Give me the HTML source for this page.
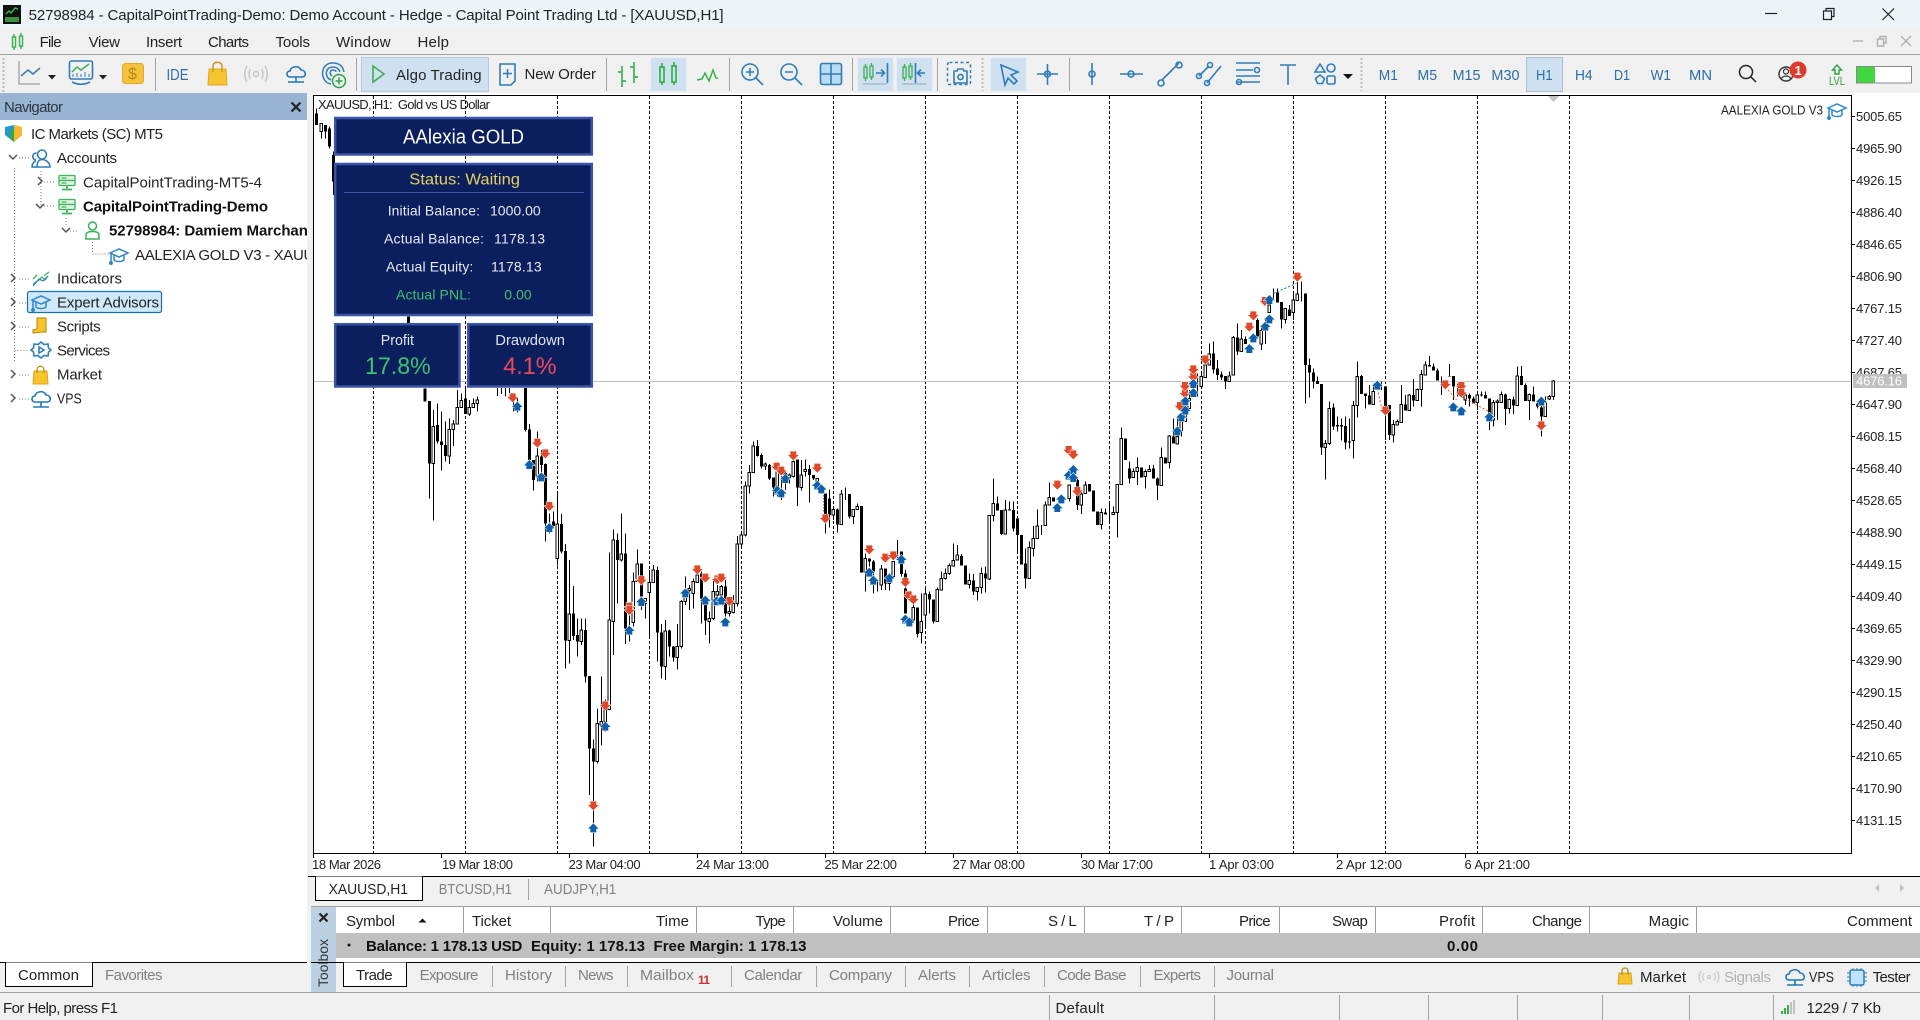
<!DOCTYPE html>
<html lang="en"><head><meta charset="utf-8"><title>MT5</title>
<style>
html,body{margin:0;padding:0;background:#f0f0f0;width:1920px;height:1020px;overflow:hidden}
svg{display:block;position:absolute;left:0;top:0}
text{font-family:"Liberation Sans",sans-serif;font-size:15px;fill:#222;white-space:pre}
.g{fill:#808080}.b{font-weight:bold;fill:#111}
.tf{fill:#2a6fa8;font-size:15px}
.ax{font-size:13px;fill:#222}
.p{fill:#e8eaf4;font-size:14px}
.ic{fill:none;stroke:#2f7db9;stroke-width:1.6}
.sep{stroke:#a0a0a0;stroke-width:1}
.dot{stroke:#777;stroke-width:1;stroke-dasharray:1 2;fill:none}
.chev{fill:none;stroke:#555;stroke-width:1.5}
</style></head><body>
<svg width="1920" height="1020" viewBox="0 0 1920 1020" xmlns="http://www.w3.org/2000/svg">
<defs>
<path id="d" d="M-9-14H9V-3H16L0 13-16-3H-9Z" fill="#e0482a" stroke="#fff" stroke-width="3" paint-order="stroke"/>
<path id="u" d="M-9 14H9V3H16L0-13-16 3H-9Z" fill="#0f60aa" stroke="#fff" stroke-width="3" paint-order="stroke"/>
<g id="hat" fill="none" stroke="#2f86c6" stroke-width="1.5"><path d="M1 6 10 2 19 6 10 10Z"/><path d="M5 8v5c2 2 8 2 10 0V8"/><path d="M2 7v8"/><circle cx="2" cy="16" r="1.2" fill="#2f86c6"/></g>
<g id="cloud" fill="none" stroke="#1f78b8" stroke-width="1.6"><path d="M5 13C1 13 1 7 5 7 6 2 14 1 16 6 21 6 22 13 17 13Z"/><path d="M11 13v5M3 18h16"/></g>
<g id="srv" fill="#dff3e3" stroke="#3db35a" stroke-width="1.300"><rect x=".5" y=".5" width="16" height="5" rx="1"/><rect x=".5" y="5.500" width="16" height="5" rx="1"/><path d="M3 3h5M3 8h5" fill="none"/><path d="M8.500 10.500v3M3.500 14.500h10" fill="none" stroke-width="1.800"/></g>
</defs>

<rect width="1920" height="1020" fill="#f0f0f0"/>
<rect width="1920" height="29" fill="#edf3f7"/>
<rect y="54" width="1920" height="1" fill="#a0a0a0"/>

<!-- title bar -->
<rect x="3" y="5" width="18" height="19" fill="#111"/>
<path d="M6 14l3-3 2 2 4-5 3 1" stroke="#38b24a" stroke-width="1.5" fill="none"/>
<rect x="5" y="17" width="14" height="5" fill="#3f8f3f"/>
<text x="28.6" y="20" textLength="695">52798984 - CapitalPointTrading-Demo: Demo Account - Hedge - Capital Point Trading Ltd - [XAUUSD,H1]</text>
<path d="M1765 13.5h12" stroke="#222" stroke-width="1.2"/>
<path d="M1823.5 11h8v8.5h-8zM1826 11V8.5h8v8h-2.5" fill="none" stroke="#222" stroke-width="1.2"/>
<path d="M1882.500 8.500l11.500 11.500M1894 8.500l-11.500 11.500" stroke="#222" stroke-width="1.2"/>

<!-- menu -->
<g fill="none" stroke="#3db35a" stroke-width="1.5"><path d="M12.500 37h3v10h-3zM19.500 36h3v10h-3zM14 34v3M14 47v3M21 33v3M21 46v3"/></g>
<text x="39.600" y="47" textLength="22">File</text>
<text x="88.600" y="47" textLength="31.400">View</text>
<text x="146" y="47" textLength="36">Insert</text>
<text x="208" y="47" textLength="41">Charts</text>
<text x="275.500" y="47" textLength="34.500">Tools</text>
<text x="336" y="47" textLength="54.600">Window</text>
<text x="417.500" y="47" textLength="31.500">Help</text>
<path d="M1853 41h10" stroke="#b0b0b0" stroke-width="1.4"/>
<path d="M1877.500 39h6v7h-6zM1880 39v-2.500h6v6.500h-2.500" fill="none" stroke="#b0b0b0" stroke-width="1.4"/>
<path d="M1901 36l10 10M1911 36l-10 10" stroke="#b0b0b0" stroke-width="1.4"/>

<!-- toolbar -->
<path d="M3.500 58v34" stroke="#b8b8b8" stroke-width="2" stroke-dasharray="2 2"/>
<path d="M19 61V84H40" fill="none" stroke="#aaa" stroke-width="1.500"/>
<path d="M21 76l7-6 5 4 7-6" fill="none" stroke="#2f7db9" stroke-width="1.500"/>
<path d="M48 75h8l-4 4.500z" fill="#222"/>
<rect x="69.500" y="61" width="23" height="18" rx="2" class="ic"/>
<path d="M72 72l5-5 4 3 8-6" fill="none" stroke="#3db35a" stroke-width="1.500"/>
<path d="M73 77v-3M77 77v-4M81 77v-3M85 77v-5M89 77v-3" stroke="#2f7db9"/>
<path d="M72 82c6 3 12 3 18 0" class="ic"/>
<path d="M99 75h8l-4 4.500z" fill="#222"/>
<rect x="122.500" y="63.500" width="21" height="20" rx="3" fill="#f6c23e" stroke="#e0a92a"/>
<text x="128" y="79" style="font-size:16px;fill:#b98a13">$</text>
<path d="M155.500 58v33M356.500 58v33M606.500 58v33M729.500 58v33M852.500 58v33M937.500 58v33M1069.500 58v33" class="sep"/>
<text x="166.500" y="80" textLength="22" lengthAdjust="spacingAndGlyphs" style="fill:#2a6fa8;font-size:16px">IDE</text>
<path d="M209 69h17l1 16h-19z" fill="#f5c42e" stroke="#e0a92a"/>
<path d="M213 72v-6c0-5 9-5 9 0v6" fill="none" stroke="#c79418" stroke-width="1.400"/>
<g fill="none" stroke="#c4c4c4" stroke-width="1.400"><circle cx="256" cy="74" r="2.500"/><path d="M250.500 69c-2 3-2 7 0 10M261.500 69c2 3 2 7 0 10M247 66c-3 5-3 11 0 16M265 66c3 5 3 11 0 16"/></g>
<use href="#cloud" x="285" y="64"/>
<g fill="none" stroke="#2f7db9" stroke-width="1.500"><path d="M331 84c-12-2-11-22 2-21 7 0 10 4 11 9"/><path d="M331 80c-7-3-6-13 2-13 4 0 6 2 7 5"/><path d="M332 76c-3-2-2-6 1-6 2 0 3 1 3 2"/></g>
<circle cx="339" cy="81" r="6.500" fill="#e6f6e8" stroke="#2f9e4a" stroke-width="1.500"/><path d="M339 77.500v7M335.500 81h7" stroke="#2f9e4a" stroke-width="1.500"/>
<rect x="361.500" y="57.500" width="127" height="34" fill="#cfe0f0" stroke="#b5c9dc"/>
<path d="M373 66l11 8-11 8z" fill="none" stroke="#3cb054" stroke-width="1.600"/>
<text x="396" y="80" textLength="85.600">Algo Trading</text>
<path d="M500 64h15v17l-4 4h-11z" class="ic"/><path d="M507.500 69v9M503 73.500h9" stroke="#2f7db9" stroke-width="1.500"/>
<text x="524.500" y="79" textLength="71.500">New Order</text>
<g fill="none" stroke="#3db35a" stroke-width="1.700"><path d="M622 66v21M618 72h4M622 81h4M634 62v21M630 67h4M634 77h4"/></g>
<rect x="650.500" y="57.500" width="36" height="34" fill="#cfe0f0" stroke="#e8eef4"/>
<g fill="none" stroke="#35b04c" stroke-width="1.700"><path d="M660 67h4v15h-4zM672 66h4v16h-4zM662 63v4M662 82v3M674 62v4M674 82v3"/></g>
<path d="M697 80l5-1 3-6 4 8 4-11 3 8h2" fill="none" stroke="#35b04c" stroke-width="1.500"/>
<g class="ic"><circle cx="750" cy="72" r="8" class="ic"/><path d="M756 78l7 7M746 72h8M750 68v8" class="ic"/><circle cx="789" cy="72" r="8" class="ic"/><path d="M795 78l7 7M785 72h8" class="ic"/></g>
<rect x="820.500" y="63.500" width="21" height="21" rx="2" fill="#b9dcf3" stroke="#2f7db9" stroke-width="1.600"/><path d="M831 64v20M821 74h20" stroke="#2f7db9" stroke-width="1.600"/>
<rect x="857.500" y="57.500" width="36" height="34" fill="#cfe0f0" stroke="#e8eef4"/>
<rect x="896.500" y="57.500" width="36" height="34" fill="#cfe0f0" stroke="#e8eef4"/>
<g fill="none" stroke="#35b04c" stroke-width="1.300"><path d="M864 67h3v11h-3zM870 66h3v11h-3zM865.500 64v3M865.500 78v3M871.500 63v3M871.500 77v3M903 67h3v11h-3zM909 66h3v11h-3zM904.500 64v3M904.500 78v3M910.500 63v3M910.500 77v3"/></g>
<path d="M876 73h8M881 69.500l3.500 3.500-3.500 3.500M925 73h-7M921 69.500l-3.500 3.500 3.500 3.500M887.500 63v20M915.500 63v20" class="ic"/>
<path d="M863 84h24M902 84h24" stroke="#9fb0c0" stroke-width="1.200"/>
<rect x="947.500" y="62.500" width="23" height="22" rx="2" fill="none" stroke="#2f7db9" stroke-width="1.500" stroke-dasharray="3 2.500"/>
<path d="M954 71h3l1-2h5l1 2h3v12h-13z" class="ic" fill="#f0f0f0"/><circle cx="960.500" cy="77" r="2.600" class="ic"/>
<path d="M982.500 58v33M1361.500 58v33" stroke="#c0c0c0" stroke-width="2" stroke-dasharray="2 2"/>
<rect x="990.500" y="57.500" width="36" height="34" fill="#cfe0f0" stroke="#e8eef4"/>
<path d="M1001 65l17 7-7 3 6 6-3 3-6-6-3 7z" class="ic"/>
<path d="M1037 74h21M1047.500 64v21" class="ic"/><circle cx="1047.500" cy="74" r="3" fill="#f0f0f0" class="ic"/>
<path d="M1092 63v22" class="ic"/><circle cx="1092" cy="74" r="3" fill="#f0f0f0" class="ic"/>
<path d="M1120 74h23" class="ic"/><circle cx="1131" cy="74" r="3" fill="#f0f0f0" class="ic"/>
<path d="M1162 80l17-17" class="ic"/><circle cx="1161" cy="83" r="3" fill="#f0f0f0" class="ic"/><circle cx="1179" cy="65" r="3" fill="#f0f0f0" class="ic"/>
<path d="M1199 76l10-10M1207 83l14-17" class="ic"/><circle cx="1199" cy="76" r="2.500" fill="#f0f0f0" class="ic"/><circle cx="1210" cy="65" r="2.500" fill="#f0f0f0" class="ic"/><circle cx="1207" cy="83" r="2.500" fill="#f0f0f0" class="ic"/>
<path d="M1236 63h24M1236 70h17M1236 82h24M1236 76h24" class="ic"/><circle cx="1257" cy="70" r="2.500" fill="#f0f0f0" class="ic"/><circle cx="1239" cy="82" r="2.500" fill="#f0f0f0" class="ic"/>
<path d="M1280 65h16M1288 65v20" class="ic"/>
<path d="M1320 64l5 8h-10z" class="ic"/><circle cx="1331" cy="68" r="4" class="ic"/><path d="M1320 75l4.500 3.500-2 5h-5l-2-5z" class="ic"/><rect x="1327" y="76" width="8" height="8" rx="1.500" class="ic"/>
<path d="M1343 74h10l-5 5z" fill="#111"/>
<text class="tf" x="1378.800" y="80" textLength="19.200" lengthAdjust="spacingAndGlyphs">M1</text>
<text class="tf" x="1417.500" y="80" textLength="19.500" lengthAdjust="spacingAndGlyphs">M5</text>
<text class="tf" x="1452.600" y="80" textLength="27.800" lengthAdjust="spacingAndGlyphs">M15</text>
<text class="tf" x="1491.400" y="80" textLength="28.200" lengthAdjust="spacingAndGlyphs">M30</text>
<rect x="1526.500" y="57.500" width="36" height="34" fill="#cfe0f0" stroke="#a9bfd5"/>
<text class="tf" x="1536" y="80" textLength="16.600" lengthAdjust="spacingAndGlyphs">H1</text>
<text class="tf" x="1575" y="80" textLength="17.600" lengthAdjust="spacingAndGlyphs">H4</text>
<text class="tf" x="1614" y="80" textLength="16" lengthAdjust="spacingAndGlyphs">D1</text>
<text class="tf" x="1650.600" y="80" textLength="20.400" lengthAdjust="spacingAndGlyphs">W1</text>
<text class="tf" x="1689" y="80" textLength="23" lengthAdjust="spacingAndGlyphs">MN</text>
<circle cx="1746" cy="72" r="6.500" fill="none" stroke="#222" stroke-width="1.500"/><path d="M1751 77l5 5" stroke="#222" stroke-width="1.500"/>
<circle cx="1786" cy="74" r="7" fill="none" stroke="#333" stroke-width="1.400"/><circle cx="1786" cy="71.500" r="2.500" fill="none" stroke="#333" stroke-width="1.200"/><path d="M1781 79c2-4 8-4 10 0" fill="none" stroke="#333" stroke-width="1.200"/>
<circle cx="1798" cy="70" r="8.500" fill="#e03a2a"/><text x="1794.500" y="75" style="font-size:13px;fill:#fff;font-weight:bold">1</text>
<path d="M1837 65l4.500 5h-2.500v4h-4v-4h-2.500z" fill="none" stroke="#2ea23f" stroke-width="1.400"/>
<text x="1829" y="85" textLength="16" lengthAdjust="spacingAndGlyphs" style="font-size:12px;fill:#2ea23f">LVL</text>
<rect x="1856.500" y="66.500" width="55" height="16.500" fill="#fff" stroke="#8a8a8a"/>
<rect x="1857" y="67" width="18" height="15.500" fill="#3fd63f"/>

<!-- navigator -->
<rect x="0" y="120" width="307" height="842" fill="#fff"/>
<rect x="0" y="93" width="307" height="27" fill="#9ab5d3"/>
<text x="4" y="112" textLength="59" style="fill:#2a3440">Navigator</text>
<path d="M291.500 102.500l9 9M300.500 102.500l-9 9" stroke="#222" stroke-width="2.200"/>

<path d="M14.500 168v193M14.500 350.500h14M92.500 242v12h16M41 171v38M66 218v8" class="dot"/>
<path d="M19 158h10M44 182h10M44 206h10M70 231h8M19 279h10M19 303h8M19 327h10M19 375h10M19 399h10" class="dot"/>
<path d="M5 127l9-2 8 2v8l-8 7-9-7z" fill="#1f9ad6"/><path d="M14 125l8 2v8l-8 7z" fill="#f5b82e"/><path d="M10 130l4-1v13l-4-3z" fill="#36a84a"/>
<text x="31" y="139" textLength="132">IC Markets (SC) MT5</text>
<path d="M9 155l4 4 4-4" class="chev"/>
<g class="ic"><circle cx="42" cy="154.500" r="4.500"/><path d="M36 160a3.500 3.500 0 0 1 .5-7M37 167c0-5 2-7.500 5-7.500s8 2.500 8 7.500zM32 167c0-3 1-5 4-6"/><path d="M31.500 167H37"/></g>
<text x="57" y="163" textLength="60">Accounts</text>
<path d="M38 177l4 4-4 4" class="chev"/>
<use href="#srv" x="58.500" y="175"/>
<text x="83" y="187.500" textLength="179">CapitalPointTrading-MT5-4</text>
<path d="M36 204l4 4 4-4" class="chev"/>
<use href="#srv" x="58.500" y="199"/>
<text class="b" x="83" y="211.500" textLength="185">CapitalPointTrading-Demo</text>
<path d="M62 228l4 4 4-4" class="chev"/>
<g fill="none" stroke="#36b35a" stroke-width="1.500"><circle cx="92.500" cy="226" r="4"/><path d="M86 239v-4c0-3 3-3.500 6.500-3.500s6.500.5 6.500 3.500v4z"/></g>
<text class="b" x="109" y="235.500" textLength="208">52798984: Damiem Marchand</text>
<use href="#hat" x="109" y="247"/>
<text x="135" y="260" textLength="222">AALEXIA GOLD V3 - XAUUSD,H1</text>
<path d="M11 274l4 4-4 4" class="chev"/>
<path d="M33 284l6-4 3-3 3 3 3-4M33 279l4-4M44 276l5-4" fill="none" stroke="#3db35a" stroke-width="1.300"/><path d="M33 286l6-7 4 2 5-5" fill="none" stroke="#2f7db9" stroke-width="1.200"/>
<text x="57" y="283.500" textLength="65">Indicators</text>
<path d="M11 298l4 4-4 4" class="chev"/>
<rect x="27.500" y="291.500" width="134" height="21" rx="2" fill="#cfe8fa" stroke="#1c6fae" stroke-width="1.200"/>
<use href="#hat" x="31" y="294"/>
<text x="57" y="307.500" textLength="102">Expert Advisors</text>
<path d="M11 322l4 4-4 4" class="chev"/>
<path d="M37 318h9v14h-4l-9 1v-3l4-1z" fill="#f6c52e" stroke="#c89218" stroke-width="1.200"/>
<text x="57" y="331.500" textLength="43.700">Scripts</text>
<path d="M41 342l3 2.500 4-.5.5 4 2.500 2-2.500 2-.5 4-4-.5-3 2.500-3-2.500-4 .5-.5-4-2.500-2 2.500-2 .5-4 4 .5z" class="ic"/><path d="M39 347l5 3-5 3z" class="ic" stroke-width="1.100"/>
<text x="57" y="355.500" textLength="53">Services</text>
<path d="M11 370l4 4-4 4" class="chev"/>
<path d="M34 371h13l1 13h-15z" fill="#f6c52e" stroke="#d9a520"/><path d="M37 373v-3c0-5 7-5 7 0v3" fill="none" stroke="#c08c14" stroke-width="1.300"/>
<text x="57" y="379.500" textLength="45">Market</text>
<path d="M11 394l4 4-4 4" class="chev"/>
<use href="#cloud" x="30" y="389"/>
<text x="57" y="403.500" textLength="24.700" lengthAdjust="spacingAndGlyphs">VPS</text>

<!-- chart area -->
<rect x="307" y="93" width="1613" height="783" fill="#fff"/>
<rect x="307" y="93" width="6" height="783" fill="#f0f0f0"/>
<rect x="313" y="95" width="1539" height="1" fill="#000"/>
<rect x="313" y="95" width="1" height="759" fill="#000"/>
<rect x="1851" y="95" width="1" height="759" fill="#000"/>
<rect x="313" y="853" width="1539" height="1" fill="#000"/>
<rect x="308" y="876" width="1612" height="1" fill="#000"/>

<path d="M373.500 96V853M465.500 96V853M557.500 96V853M649.500 96V853M741.500 96V853M833.500 96V853M925.500 96V853M1017.500 96V853M1109.500 96V853M1201.500 96V853M1293.500 96V853M1385.500 96V853M1477.500 96V853M1569.500 96V853" stroke="#000" stroke-width="1" stroke-dasharray="3 2"/>
<rect x="314" y="381" width="1537" height="1" fill="#c0c0c0"/>

<!-- top-left candles -->
<g transform="translate(310 95) scale(.33333)" shape-rendering="crispEdges">
<path d="M34 85V130M46 90V130M20 40V90M58 95V160M70 170V300" stroke="#000" stroke-width="3" fill="none"/>
<path d="M20 55V90M46 90V110M58 100V155M70 180V260M295 665V690M345 880V920" stroke="#000" stroke-width="9" fill="none"/>
<path d="M30 85h8V110h-8z" stroke="#000" stroke-width="3" fill="#fff"/>
</g>

<!-- group A -->
<g transform="translate(320 400) scale(.33333)">
<path shape-rendering="crispEdges" stroke="#000" stroke-width="3" fill="none" d="M316-20V5M328 3V295M340 30V362M352 10V130M364 35V212M376 65V185M388 55V192M400 60V138M412-30V72M424-20V22M436-40V42M448 0V48M460-5V22M472-10V35M532-36V-12M544-36V-18M556-36V-10M568-36V-20M580-20V35M592-10V38M616-36V95M628 72V190M640 180V272M652 95V245M664 150V230M676 190V425M688 340V400M700 335V380M712 275V497M724 342V460M736 432V806M748 480V790M760 558V720M772 655V770M784 655V735M796 655V848M808 828V1185M820 1018V1340M832 925V1090M844 830V1037M856 898V995M868 458V930M880 388V765M892 400V610M904 340V485M916 400V732M928 640V725M940 518V680M952 448V545M964 490V630M976 595V655M988 510V715M1000 495V547M1012 500V785M1024 672V835M1036 660V840M1048 688V770M1060 738V785M1072 672V808M1084 600V745M1096 530V615M1108 555V630M1120 535V625M1132 505V548M1144 515V670M1156 610V705M1168 635V730M1180 540V660M1192 555V610M1204 555V600M1216 540V650M1228 610V650M1240 585V640M1252 408V620M1264 400V438M1276 245V410M1288 195V280M1300 125V218M1312 120V170M1324 160V205M1336 188V210M1348 192V240M1360 232V290M1372 190V290M1384 215V300M1396 210V270M1408 220V250M1420 165V232M1432 178V318"/>
<path shape-rendering="crispEdges" stroke="#000" stroke-width="9" fill="none" d="M328 3V190M352 75V125M364 125V135M376 135V168M436-5V42M616-36V90M628 88V180M640 180V240M664 170V195M676 192V370M700 365V378M724 372V455M736 453V722M760 640V708M772 705V725M796 690V830M808 828V1046M820 1045V1085M892 420V480M916 460V685M964 490V590M1012 510V698M1024 698V800M1048 692V740M1060 740V772M1144 520V595M1156 615V662M1216 560V640M1312 138V168M1324 165V200M1348 195V235M1360 232V262M1432 178V262"/>
<path shape-rendering="crispEdges" stroke="#000" stroke-width="3" fill="#fff" d="M336 80h8V190h-8zM384 88h8V168h-8zM396 72h8V88h-8zM408 22h8V72h-8zM420 2h8V22h-8zM444 22h8V42h-8zM456 10h8V22h-8zM468 0h8V10h-8zM648 168h8V228h-8zM708 372h8V475h-8zM744 642h8V722h-8zM780 690h8V725h-8zM828 970h8V1085h-8zM840 965h8V975h-8zM852 925h8V965h-8zM864 660h8V928h-8zM876 420h8V665h-8zM900 462h8V480h-8zM936 545h8V668h-8zM948 492h8V545h-8zM972 595h8V610h-8zM984 547h8V578h-8zM996 510h8V547h-8zM1032 693h8V800h-8zM1068 740h8V772h-8zM1080 605h8V740h-8zM1092 590h8V605h-8zM1104 565h8V572h-8zM1116 545h8V580h-8zM1128 525h8V548h-8zM1164 655h8V665h-8zM1176 575h8V655h-8zM1188 575h8V585h-8zM1200 560h8V585h-8zM1224 635h8V640h-8zM1236 610h8V638h-8zM1248 432h8V610h-8zM1260 405h8V432h-8zM1272 258h8V405h-8zM1284 218h8V258h-8zM1296 138h8V218h-8zM1332 192h8V198h-8zM1368 200h8V265h-8zM1392 220h8V240h-8zM1404 225h8V232h-8zM1416 185h8V230h-8z"/>
<use href="#d" x="578" y="-6"/><use href="#d" x="652" y="130"/><use href="#d" x="676" y="162"/><use href="#d" x="688" y="320"/><use href="#d" x="928" y="622"/><use href="#d" x="928" y="632"/><use href="#d" x="964" y="542"/><use href="#d" x="856" y="918"/><use href="#d" x="820" y="1218"/><use href="#d" x="1132" y="510"/><use href="#d" x="1156" y="535"/><use href="#d" x="1192" y="540"/><use href="#d" x="1204" y="535"/><use href="#d" x="1228" y="605"/><use href="#d" x="1370" y="202"/><use href="#d" x="1384" y="214"/><use href="#d" x="1420" y="168"/>
<use href="#u" x="592" y="18"/><use href="#u" x="628" y="193"/><use href="#u" x="664" y="230"/><use href="#u" x="688" y="382"/><use href="#u" x="928" y="690"/><use href="#u" x="964" y="604"/><use href="#u" x="856" y="978"/><use href="#u" x="820" y="1283"/><use href="#u" x="1096" y="578"/><use href="#u" x="1156" y="600"/><use href="#u" x="1190" y="602"/><use href="#u" x="1204" y="600"/><use href="#u" x="1216" y="665"/><use href="#u" x="1372" y="270"/><use href="#u" x="1384" y="278"/><use href="#u" x="1396" y="235"/>
</g>

<!-- group B -->
<g transform="translate(800 400) scale(.33333)">
<path shape-rendering="crispEdges" stroke="#000" stroke-width="3" fill="none" d="M4 180V272M16 178V230M28 195V308M40 225V240M52 235V250M76 280V400M88 268V382M100 328V360M112 325V398M124 270V373M136 262V300M148 282V355M160 328V372M172 310V330M184 318V518M196 460V575M208 475V500M220 480V580M232 545V575M244 495V570M256 505V570M268 525V572M280 485V530M292 420V480M304 455V530M316 510V640M340 610V660M352 622V712M364 580V730M376 562V678M388 575V640M400 598V670M412 562V665M424 515V570M436 505V538M448 490V525M460 430V498M472 435V480M484 462V497M496 497V553M508 520V565M520 522V585M532 562V602M544 503V580M556 500V578M568 345V540M580 235V365M592 290V332M604 330V405M616 300V402M628 305V332M640 305V395M652 355V460M664 405V493M676 445V565M688 425V535M700 378V470M712 328V415M724 375V405M736 305V377M748 248V315M760 292V305M808 255V305M832 235V330M844 270V342M856 245V280M868 252V275M880 272V335M892 335V375M904 325V388M916 325V343M928 310V370M940 320V343M952 253V412M964 82V253M976 115V180M988 185V250M1000 205V233M1012 172V255M1024 203V233M1036 208V265M1048 195V215M1060 195V235M1072 232V300M1084 143V257M1096 172V190M1108 105V205M1120 55V130M1132 85V130M1144 70V110"/>
<path shape-rendering="crispEdges" stroke="#000" stroke-width="9" fill="none" d="M28 207V225M40 225V235M76 280V345M88 295V345M112 328V373M148 282V350M184 318V518M208 475V485M220 485V515M256 505V550M304 455V522M316 520V540M316 565V640M352 622V702M388 582V598M400 598V665M484 468V497M496 497V553M520 542V575M556 520V535M592 310V332M604 330V402M628 328V332M640 330V385M652 355V405M664 405V493M676 490V535M760 292V305M832 240V315M868 252V275M880 272V335M892 335V375M916 338V343M976 115V180M988 205V235M1024 203V233M1060 205V235M1072 235V257M1096 172V190M1120 110V130"/>
<path shape-rendering="crispEdges" stroke="#000" stroke-width="3" fill="#fff" d="M0 225h8V262h-8zM12 208h8V215h-8zM48 235h8V245h-8zM96 328h8V345h-8zM120 282h8V373h-8zM156 328h8V350h-8zM168 320h8V328h-8zM192 475h8V518h-8zM240 507h8V555h-8zM264 525h8V550h-8zM276 485h8V530h-8zM336 622h8V660h-8zM360 665h8V697h-8zM372 582h8V645h-8zM408 568h8V665h-8zM420 535h8V570h-8zM432 520h8V535h-8zM444 497h8V520h-8zM456 482h8V498h-8zM468 465h8V480h-8zM504 542h8V553h-8zM528 562h8V575h-8zM540 520h8V562h-8zM564 347h8V537h-8zM576 310h8V347h-8zM612 330h8V402h-8zM684 442h8V535h-8zM696 415h8V445h-8zM708 378h8V415h-8zM732 315h8V377h-8zM744 292h8V315h-8zM804 255h8V295h-8zM840 282h8V315h-8zM852 255h8V280h-8zM900 337h8V373h-8zM936 338h8V343h-8zM948 253h8V338h-8zM960 115h8V253h-8zM996 215h8V233h-8zM1008 203h8V215h-8zM1032 215h8V230h-8zM1044 208h8V215h-8zM1080 172h8V257h-8zM1104 108h8V188h-8zM1128 108h8V130h-8z"/>
<path d="M70 285l1 50" stroke="#0f60aa" stroke-width="2" stroke-dasharray="5 4" fill="none"/>
<use href="#d" x="52" y="205"/><use href="#d" x="76" y="357"/><use href="#d" x="208" y="450"/><use href="#d" x="256" y="475"/><use href="#d" x="280" y="468"/><use href="#d" x="316" y="548"/><use href="#d" x="326" y="588"/><use href="#d" x="340" y="600"/><use href="#d" x="772" y="256"/><use href="#d" x="806" y="152"/><use href="#d" x="820" y="165"/><use href="#d" x="832" y="275"/><use href="#d" x="1140" y="20"/>
<use href="#u" x="52" y="255"/><use href="#u" x="64" y="266"/><use href="#u" x="208" y="516"/><use href="#u" x="220" y="540"/><use href="#u" x="268" y="533"/><use href="#u" x="304" y="477"/><use href="#u" x="316" y="657"/><use href="#u" x="328" y="665"/><use href="#u" x="772" y="322"/><use href="#u" x="784" y="296"/><use href="#u" x="806" y="225"/><use href="#u" x="820" y="208"/><use href="#u" x="820" y="232"/>
</g>

<!-- group C -->
<g transform="translate(1140 240) scale(.33333)">
<path shape-rendering="crispEdges" stroke="#000" stroke-width="3" fill="none" d="M112 535V612M124 500V575M136 470V545M148 450V505M172 400V470M184 400V435M196 355V412M208 310V375M220 305V400M232 360V420M244 395V420M256 408V447M268 395V425M280 288V405M292 250V345M304 270V335M316 290V312M352 235V290M364 260V330M376 235V312M388 180V218M400 145V180M412 145V188M424 186V265M436 205V250M448 195V228M460 160V240M472 125V182M484 125V185M496 160V490M508 355V472M520 385V445M532 410V432M544 432V645M556 600V718M568 485V615M580 490V570M592 530V575M604 535V602M616 530V628M628 535V625M640 483V655M652 365V532M664 405V462M676 460V505M688 435V493M700 430V493M724 425V450M736 440V600M748 495V600M760 540V608M772 538V555M784 435V547M796 465V512M808 462V512M820 417V500M832 445V482M844 390V500M856 365V405M868 348V380M880 370V392M892 385V422M904 410V465M928 372V410M940 408V480M952 430V470M976 460V495M988 460V500M1000 470V490M1012 460V510M1024 455V470M1036 455V475M1048 475V570M1060 480V560M1072 478V540M1084 455V487M1096 460V555M1108 475V520M1120 470V522M1132 380V497M1144 378V435M1156 430V483M1168 460V540M1180 440V485M1192 480V505M1204 495V590M1216 470V530M1228 465V480M1240 420V480"/>
<path shape-rendering="crispEdges" stroke="#000" stroke-width="9" fill="none" d="M220 340V388M232 385V405M244 403V412M256 408V425M292 292V335M316 297V312M352 240V290M412 158V188M424 186V238M448 208V228M496 160V375M508 375V398M520 398V425M532 423V432M544 432V622M580 503V560M592 555V559M604 555V559M616 558V608M628 605V608M664 408V462M676 460V468M688 466V493M736 440V500M748 495V585M796 493V512M820 465V482M868 375V380M880 380V392M892 392V422M928 408V410M940 408V440M988 465V475M1000 475V490M1024 463V467M1036 465V475M1048 475V520M1096 463V507M1120 478V497M1144 408V435M1156 435V483M1180 463V485M1192 490V500M1204 502V530"/>
<path shape-rendering="crispEdges" stroke="#000" stroke-width="3" fill="#fff" d="M108 590h8V612h-8zM120 545h8V575h-8zM132 505h8V545h-8zM144 475h8V505h-8zM180 410h8V440h-8zM192 375h8V412h-8zM204 342h8V375h-8zM264 408h8V425h-8zM276 292h8V405h-8zM300 297h8V335h-8zM360 272h8V312h-8zM384 195h8V218h-8zM432 205h8V238h-8zM456 180h8V218h-8zM468 162h8V182h-8zM552 610h8V622h-8zM564 505h8V610h-8zM636 497h8V602h-8zM648 410h8V497h-8zM696 455h8V493h-8zM756 553h8V585h-8zM768 545h8V555h-8zM780 493h8V547h-8zM804 465h8V512h-8zM828 448h8V482h-8zM840 403h8V448h-8zM852 375h8V405h-8zM972 465h8V480h-8zM1008 465h8V487h-8zM1056 487h8V540h-8zM1068 483h8V488h-8zM1080 463h8V487h-8zM1104 478h8V505h-8zM1128 408h8V497h-8zM1164 463h8V482h-8zM1212 488h8V530h-8zM1224 470h8V477h-8zM1236 423h8V470h-8z"/>
<path d="M400 160L470 130" stroke="#0f60aa" stroke-width="2.500" stroke-dasharray="7 5" fill="none"/>
<path d="M916 440L950 480M964 470L1048 515M712 445L725 505" stroke="#d94a2c" stroke-width="2.500" stroke-dasharray="7 5" fill="none"/>
<use href="#d" x="472" y="112"/><use href="#d" x="196" y="360"/><use href="#d" x="160" y="412"/><use href="#d" x="160" y="390"/><use href="#d" x="135" y="462"/><use href="#d" x="135" y="440"/><use href="#d" x="120" y="500"/><use href="#d" x="340" y="228"/><use href="#d" x="328" y="262"/><use href="#d" x="375" y="185"/><use href="#d" x="916" y="435"/><use href="#d" x="964" y="440"/><use href="#d" x="964" y="460"/><use href="#d" x="736" y="513"/><use href="#d" x="1204" y="558"/>
<use href="#u" x="112" y="572"/><use href="#u" x="124" y="530"/><use href="#u" x="136" y="510"/><use href="#u" x="136" y="482"/><use href="#u" x="160" y="457"/><use href="#u" x="160" y="430"/><use href="#u" x="328" y="325"/><use href="#u" x="340" y="293"/><use href="#u" x="376" y="258"/><use href="#u" x="388" y="236"/><use href="#u" x="388" y="178"/><use href="#u" x="712" y="435"/><use href="#u" x="940" y="500"/><use href="#u" x="964" y="512"/><use href="#u" x="1048" y="530"/><use href="#u" x="1204" y="483"/>
</g>

<!-- chart labels -->
<text class="ax" x="318" y="109" textLength="172">XAUUSD, H1:  Gold vs US Dollar</text>
<text class="ax" x="1721" y="114.500" textLength="102" lengthAdjust="spacingAndGlyphs">AALEXIA GOLD V3</text>
<use href="#hat" x="1827" y="102"/>
<path d="M1548 96h11l-5.500 6z" fill="#c4c4c4"/>

<!-- EA panels -->
<g fill="#0b1f5e" stroke="#3c54a6" stroke-width="2.500">
<rect x="335.200" y="118" width="256.600" height="36.500"/>
<rect x="335.200" y="164" width="256.600" height="151"/>
<rect x="335.200" y="324.200" width="124.300" height="62.300"/>
<rect x="468.200" y="324.200" width="123.600" height="62.300"/>
</g>
<text x="403" y="143.500" textLength="121" lengthAdjust="spacingAndGlyphs" style="font-size:20px;fill:#fff">AAlexia GOLD</text>
<text x="409.300" y="184.500" textLength="110.700" lengthAdjust="spacingAndGlyphs" style="font-size:16px;fill:#e6cf62">Status: Waiting</text>
<rect x="344" y="192" width="240" height="1" fill="#3c54a6"/>
<text class="p" x="387.700" y="215.700" textLength="92.300">Initial Balance:</text><text class="p" x="490" y="215.700" textLength="50.700">1000.00</text>
<text class="p" x="384" y="243.700" textLength="100">Actual Balance:</text><text class="p" x="494" y="243.700" textLength="51">1178.13</text>
<text class="p" x="386" y="271.700" textLength="87.300">Actual Equity:</text><text class="p" x="491" y="271.700" textLength="50.700">1178.13</text>
<text class="p" x="396" y="299.700" textLength="75" style="fill:#3fc26f">Actual PNL:</text><text class="p" x="504.300" y="299.700" textLength="27.400" style="fill:#3fc26f">0.00</text>
<text x="380.700" y="345" textLength="33.300" lengthAdjust="spacingAndGlyphs" style="font-size:15px;fill:#dfe3f0">Profit</text>
<text x="365" y="374" textLength="65.700" lengthAdjust="spacingAndGlyphs" style="font-size:24px;fill:#3fc26f">17.8%</text>
<text x="495.300" y="345" textLength="69.700" lengthAdjust="spacingAndGlyphs" style="font-size:15px;fill:#dfe3f0">Drawdown</text>
<text x="503.300" y="374" textLength="53.300" lengthAdjust="spacingAndGlyphs" style="font-size:24px;fill:#ef4a5a">4.1%</text>

<!-- y axis -->
<g stroke="#000"><path d="M1851 116.500h4M1851 148.500h4M1851 180.500h4M1851 212.500h4M1851 244.500h4M1851 276.500h4M1851 308.500h4M1851 340.500h4M1851 372.500h4M1851 404.500h4M1851 436.500h4M1851 468.500h4M1851 500.500h4M1851 532.500h4M1851 564.500h4M1851 596.500h4M1851 628.500h4M1851 660.500h4M1851 692.500h4M1851 724.500h4M1851 756.500h4M1851 788.500h4M1851 820.500h4"/>
<path d="M313.500 853v5M441.500 853v5M569.500 853v5M697.500 853v5M825.500 853v5M953.500 853v5M1081.500 853v5M1209.500 853v5M1337.500 853v5M1465.500 853v5"/></g>
<g class="yl">
<text class="ax" x="1856" y="121" textLength="46">5005.65</text>
<text class="ax" x="1856" y="153" textLength="46">4965.90</text>
<text class="ax" x="1856" y="185" textLength="46">4926.15</text>
<text class="ax" x="1856" y="217" textLength="46">4886.40</text>
<text class="ax" x="1856" y="249" textLength="46">4846.65</text>
<text class="ax" x="1856" y="281" textLength="46">4806.90</text>
<text class="ax" x="1856" y="313" textLength="46">4767.15</text>
<text class="ax" x="1856" y="345" textLength="46">4727.40</text>
<text class="ax" x="1856" y="377" textLength="46">4687.65</text>
<text class="ax" x="1856" y="409" textLength="46">4647.90</text>
<text class="ax" x="1856" y="441" textLength="46">4608.15</text>
<text class="ax" x="1856" y="473" textLength="46">4568.40</text>
<text class="ax" x="1856" y="505" textLength="46">4528.65</text>
<text class="ax" x="1856" y="537" textLength="46">4488.90</text>
<text class="ax" x="1856" y="569" textLength="46">4449.15</text>
<text class="ax" x="1856" y="601" textLength="46">4409.40</text>
<text class="ax" x="1856" y="633" textLength="46">4369.65</text>
<text class="ax" x="1856" y="665" textLength="46">4329.90</text>
<text class="ax" x="1856" y="697" textLength="46">4290.15</text>
<text class="ax" x="1856" y="729" textLength="46">4250.40</text>
<text class="ax" x="1856" y="761" textLength="46">4210.65</text>
<text class="ax" x="1856" y="793" textLength="46">4170.90</text>
<text class="ax" x="1856" y="825" textLength="46">4131.15</text>
</g>
<rect x="1853" y="374" width="54" height="14" fill="#c0c0c0"/>
<text class="ax" x="1856" y="385.500" textLength="46" style="fill:#fff">4676.16</text>

<!-- x axis -->
<text class="ax" x="312" y="869" textLength="69">18 Mar 2026</text>
<text class="ax" x="442" y="869" textLength="71">19 Mar 18:00</text>
<text class="ax" x="568.600" y="869" textLength="72">23 Mar 04:00</text>
<text class="ax" x="696" y="869" textLength="73">24 Mar 13:00</text>
<text class="ax" x="824.500" y="869" textLength="72.500">25 Mar 22:00</text>
<text class="ax" x="952.600" y="869" textLength="72.400">27 Mar 08:00</text>
<text class="ax" x="1081" y="869" textLength="72">30 Mar 17:00</text>
<text class="ax" x="1209" y="869" textLength="65">1 Apr 03:00</text>
<text class="ax" x="1336" y="869" textLength="66">2 Apr 12:00</text>
<text class="ax" x="1464.500" y="869" textLength="65.500">6 Apr 21:00</text>

<!-- symbol tabs -->
<path d="M315.500 876.500V900.500H422.500V876.500" fill="#fff" stroke="#000"/>
<text x="328.600" y="894" textLength="79.400" lengthAdjust="spacingAndGlyphs">XAUUSD,H1</text>
<text class="g" x="438.800" y="894" textLength="73.200" lengthAdjust="spacingAndGlyphs">BTCUSD,H1</text>
<path d="M528.500 879v21" class="sep"/>
<text class="g" x="544" y="894" textLength="72.300" lengthAdjust="spacingAndGlyphs">AUDJPY,H1</text>
<path d="M1879 884l-4 4 4 4zM1900 884l4 4-4 4z" fill="#c0c0c0"/>

<!-- toolbox -->
<rect y="906" x="311" width="1609" height="1" fill="#a0a0a0"/>
<rect x="311" y="907" width="25" height="85" fill="#bcd0e3"/>
<path d="M319.500 913.500l8 8M327.500 913.500l-8 8" stroke="#222" stroke-width="2.200"/>
<text transform="translate(328 987) rotate(-90)" textLength="48" lengthAdjust="spacingAndGlyphs" style="font-size:14px;fill:#333">Toolbox</text>
<rect x="336" y="907" width="1584" height="55" fill="#fff"/>
<rect x="336" y="933" width="1584" height="25" fill="#c0c0c0"/>
<path d="M463.500 907v26M550.500 907v26M696.500 907v26M793.500 907v26M890.500 907v26M987.500 907v26M1084.500 907v26M1181.500 907v26M1279.500 907v26M1375.500 907v26M1482.500 907v26M1589.500 907v26M1696.500 907v26" class="sep"/>
<text x="346" y="926" textLength="49">Symbol</text><path d="M418.500 922.500l4-4 4 4z" fill="#111"/>
<text x="472" y="926" textLength="39">Ticket</text>
<text x="656" y="926" textLength="33">Time</text>
<text x="755.500" y="926" textLength="30.200">Type</text>
<text x="833" y="926" textLength="50">Volume</text>
<text x="948" y="926" textLength="31.600">Price</text>
<text x="1048" y="926" textLength="28.700">S / L</text>
<text x="1144" y="926" textLength="30">T / P</text>
<text x="1239" y="926" textLength="31.600">Price</text>
<text x="1332" y="926" textLength="35.800">Swap</text>
<text x="1439" y="926" textLength="36">Profit</text>
<text x="1532" y="926" textLength="50">Change</text>
<text x="1648.600" y="926" textLength="40.400">Magic</text>
<text x="1847" y="926" textLength="65">Comment</text>
<circle cx="349" cy="945" r="1.500" fill="#111"/>
<text class="b" x="366" y="951" textLength="156.400">Balance: 1 178.13 USD</text>
<text class="b" x="531" y="951" textLength="114">Equity: 1 178.13</text>
<text class="b" x="653.500" y="951" textLength="153">Free Margin: 1 178.13</text>
<text class="b" x="1447" y="951" textLength="31">0.00</text>

<rect x="0" y="962" width="307" height="1" fill="#000"/>
<rect x="311" y="962" width="1609" height="1" fill="#000"/>
<rect x="0" y="992" width="1920" height="1" fill="#a0a0a0"/>

<!-- nav tabs -->
<path d="M5.500 962.500V986.500H92.500V962.500" fill="#fff" stroke="#000"/>
<text x="18" y="980" textLength="61">Common</text>
<text class="g" x="105" y="980" textLength="57.500">Favorites</text>

<!-- toolbox tabs -->
<path d="M343.500 962.500V986.500H406.500V962.500" fill="#fff" stroke="#000"/>
<text x="356" y="980" textLength="36.600">Trade</text>
<text class="g" x="419.600" y="980" textLength="58.800">Exposure</text>
<text class="g" x="505" y="980" textLength="47">History</text>
<text class="g" x="578" y="980" textLength="35.500">News</text>
<text class="g" x="640" y="980" textLength="54" lengthAdjust="spacingAndGlyphs">Mailbox</text>
<text x="698" y="984" textLength="12" style="font-size:12px;fill:#d02f2f;font-weight:bold">11</text>
<text class="g" x="744" y="980" textLength="58.400">Calendar</text>
<text class="g" x="829" y="980" textLength="63">Company</text>
<text class="g" x="918" y="980" textLength="38">Alerts</text>
<text class="g" x="982" y="980" textLength="48.600">Articles</text>
<text class="g" x="1057" y="980" textLength="69.500">Code Base</text>
<text class="g" x="1153.500" y="980" textLength="47.500">Experts</text>
<text class="g" x="1226.500" y="980" textLength="47.500">Journal</text>
<path d="M492.500 966v21M565.500 966v21M627.500 966v21M731.500 966v21M816.500 966v21M905.500 966v21M969.500 966v21M1044.500 966v21M1140.500 966v21M1214.500 966v21" class="sep"/>

<path d="M1619 973h12l1 11h-14z" fill="#f5c42e" stroke="#d9a520"/><path d="M1622 975v-4c0-4 6-4 6 0v4" fill="none" stroke="#b98a13" stroke-width="1.300"/>
<text x="1640" y="982" textLength="46">Market</text>
<g fill="none" stroke="#c8c8c8" stroke-width="1.200"><circle cx="1709" cy="977" r="1.500"/><path d="M1704 973c-1.500 2.500-1.500 5.500 0 8M1714 973c1.500 2.500 1.500 5.500 0 8M1701 971c-2.500 4-2.500 8 0 12M1717 971c2.500 4 2.500 8 0 12"/></g>
<text x="1724" y="982" textLength="47" style="fill:#b0b0b0">Signals</text>
<use href="#cloud" x="1784" y="967"/>
<text x="1809" y="982" textLength="25" lengthAdjust="spacingAndGlyphs">VPS</text>
<rect x="1850" y="970" width="14" height="15" rx="2" fill="#bfe4fa" stroke="#2f7db9" stroke-width="1.500"/>
<path d="M1853 968v2M1857 968v2M1861 968v2M1853 985v2M1857 985v2M1861 985v2M1847 973h3M1847 977h3M1847 981h3M1864 973h3M1864 977h3M1864 981h3" stroke="#2f7db9"/>
<text x="1872.600" y="982" textLength="38">Tester</text>

<!-- status bar -->
<text x="3" y="1013" textLength="115">For Help, press F1</text>
<path d="M1049.500 995v25M1214.500 995v25M1339.500 995v25M1428.500 995v25M1517.500 995v25M1602.500 995v25M1689.500 995v25M1773.500 995v25" class="sep"/>
<text x="1055.500" y="1013" textLength="48.500">Default</text>
<path d="M1782 1014v-3M1785 1014v-6M1788 1014v-9" stroke="#35b04c" stroke-width="2"/><path d="M1791 1014v-12M1794 1014v-14" stroke="#c0c0c0" stroke-width="2"/>
<text x="1806.500" y="1013" textLength="74.500">1229 / 7 Kb</text>
</svg>
</body></html>
